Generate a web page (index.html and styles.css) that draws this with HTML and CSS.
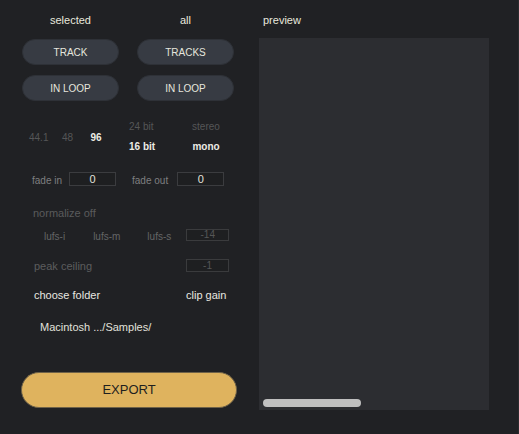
FILE: index.html
```html
<!DOCTYPE html>
<html>
<head>
<meta charset="utf-8">
<link rel="stylesheet" href="styles.css">
</head>
<body>
<div class="app">
  <div class="left">
    <div class="pair heads">
      <div class="head">selected</div>
      <div class="head">all</div>
    </div>
    <div class="pair buttons">
      <div class="btn">TRACK</div>
      <div class="btn">TRACKS</div>
      <div class="btn">IN LOOP</div>
      <div class="btn">IN LOOP</div>
    </div>
    <div class="format">
      <div class="rates">
        <span class="opt dim">44.1</span>
        <span class="opt dim r48">48</span>
        <span class="opt on r96">96</span>
      </div>
      <div class="bits">
        <span class="opt dim">24 bit</span>
        <span class="opt on">16 bit</span>
      </div>
      <div class="chan">
        <span class="opt dim">stereo</span>
        <span class="opt on">mono</span>
      </div>
    </div>
    <div class="fades">
      <span class="lbl">fade in</span>
      <span class="box fin">0</span>
      <span class="lbl fo">fade out</span>
      <span class="box fout">0</span>
    </div>
    <div class="normalize">normalize off</div>
    <div class="lufs">
      <span class="lufs-opt">lufs-i</span>
      <span class="lufs-opt lm">lufs-m</span>
      <span class="lufs-opt ls">lufs-s</span>
      <span class="box dimbox lbox">-14</span>
    </div>
    <div class="peak">
      <span class="peak-lbl">peak ceiling</span>
      <span class="box dimbox pbox">-1</span>
    </div>
    <div class="actions">
      <span>choose folder</span>
      <span class="clip">clip gain</span>
    </div>
    <div class="path">Macintosh .../Samples/</div>
    <div class="export">EXPORT</div>
  </div>
  <div class="right">
    <div class="head preview-title">preview</div>
    <div class="panel">
      <div class="scroll"></div>
    </div>
  </div>
</div>
</body>
</html>
```
FILE: styles.css
```css
html, body {
  margin: 0;
  padding: 0;
  background: #202124;
}
body {
  font-family: "Liberation Sans", Arial, sans-serif;
  color: #e8e8e0;
}
.app {
  display: flex;
  width: 519px;
  height: 434px;
  box-sizing: border-box;
  border-right: 1px solid #2a2b2e;
}
.left {
  width: 259px;
  box-sizing: border-box;
  padding: 13px 0 0 22px;
  display: flex;
  flex-direction: column;
}
.pair {
  display: grid;
  grid-template-columns: 97px 97px;
  column-gap: 18px;
}
.head {
  font-size: 11px;
  line-height: 14px;
  text-align: center;
  color: #e8e8de;
}
.buttons {
  margin-top: 12px;
  row-gap: 10px;
}
.btn {
  height: 26px;
  box-sizing: border-box;
  border-radius: 13px;
  background: #373b43;
  border: 1px solid #2e3137;
  font-size: 10px;
  line-height: 25px;
  text-align: center;
  color: #e6e6de;
}
.format {
  margin-top: 16px;
  height: 40px;
  display: grid;
  grid-template-columns: 100px 57px 40px;
  align-items: center;
  padding-left: 7px;
}
.opt {
  font-size: 10px;
  line-height: 20px;
}
.dim { color: #555657; }
.on { color: #ecece4; font-weight: bold; }
.r48 { margin-left: 9px; }
.r96 { margin-left: 13px; }
.bits, .chan {
  display: flex;
  flex-direction: column;
}
.chan { align-items: center; }
.fades {
  margin-top: 15px;
  display: flex;
  align-items: center;
  padding-left: 10px;
  height: 14px;
}
.lbl {
  font-size: 10px;
  color: #7e7f80;
  padding-top: 3px;
}
.box {
  box-sizing: border-box;
  border: 1px solid #3b3c3f;
  background: #1e1f21;
  text-align: center;
  font-size: 11px;
  color: #e2e2dc;
}
.fin, .fout {
  width: 47px;
  height: 14px;
  line-height: 12px;
}
.fin { margin-left: 7px; }
.fo { margin-left: 16px; }
.fout { margin-left: 9px; }
.normalize {
  margin-top: 20px;
  padding-left: 11px;
  font-size: 11px;
  line-height: 14px;
  color: #5a5b5c;
}
.lufs {
  margin-top: 9px;
  display: flex;
  align-items: center;
  padding-left: 22px;
  height: 12px;
}
.lufs-opt {
  font-size: 10px;
  color: #646566;
  padding-top: 2px;
}
.lm { margin-left: 28px; }
.ls { margin-left: 27px; }
.dimbox {
  width: 43px;
  font-size: 10px;
  color: #555657;
  border-color: #3a3b3d;
}
.lbox {
  height: 12px;
  line-height: 10px;
  margin-left: 15px;
}
.peak {
  margin-top: 18px;
  display: flex;
  align-items: center;
  padding-left: 12px;
  width: 207px;
  box-sizing: border-box;
  height: 13px;
}
.peak-lbl {
  font-size: 11px;
  color: #5c5d5e;
  padding-top: 1px;
}
.pbox {
  margin-left: auto;
  height: 13px;
  line-height: 11px;
}
.actions {
  margin-top: 16px;
  display: flex;
  padding-left: 12px;
  font-size: 11px;
  line-height: 14px;
  color: #e8e8e0;
}
.clip { margin-left: 86px; }
.path {
  margin-top: 18px;
  padding-left: 18px;
  font-size: 11px;
  line-height: 14px;
  color: #e2e2dc;
}
.export {
  margin-top: 38px;
  margin-left: -1px;
  width: 216px;
  height: 36px;
  box-sizing: border-box;
  border-radius: 18px;
  background: #dfb35e;
  border: 1px solid #6f6248;
  font-size: 13px;
  line-height: 34px;
  text-align: center;
  color: #1f1f1f;
}
.right {
  display: flex;
  flex-direction: column;
  padding-top: 13px;
}
.preview-title {
  text-align: left;
  padding-left: 4px;
}
.panel {
  margin-top: 11px;
  width: 230px;
  height: 372px;
  background: #2c2d31;
  display: flex;
  align-items: flex-end;
  box-sizing: border-box;
  padding: 0 0 3px 4px;
}
.scroll {
  width: 98px;
  height: 8px;
  border-radius: 4px;
  background: #bfbfbf;
}
```
